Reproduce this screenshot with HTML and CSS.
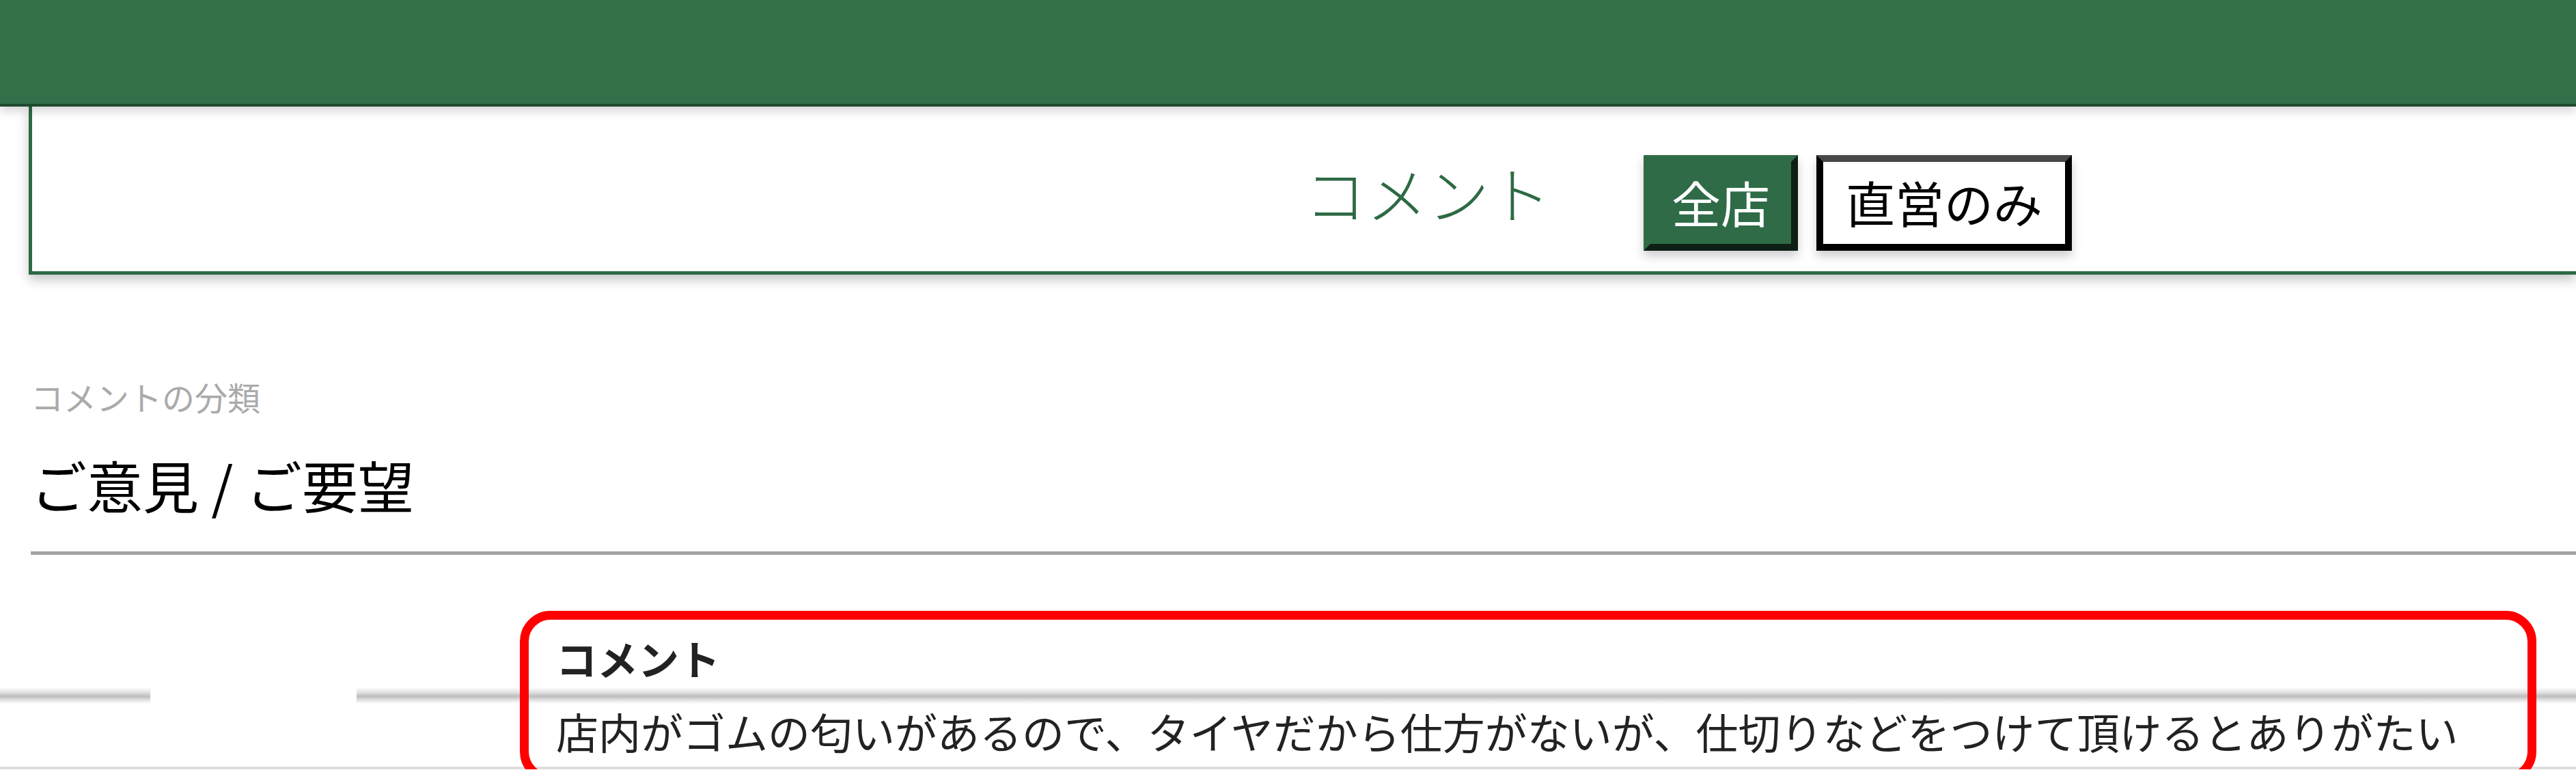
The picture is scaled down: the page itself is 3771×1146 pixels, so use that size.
FILE: index.html
```html
<!DOCTYPE html>
<html lang="ja">
<head>
    <meta charset="UTF-8">
    <meta name="viewport" content="width=device-width, initial-scale=1.0">
    <title>コメント</title>
    <link rel="stylesheet" href="styles.css">
</head>
<body>
    <div class="topbar"></div>

    <div class="headbox">
        <div class="page-title">コメント</div>
        <div class="toggle">
            <button class="toggle-btn active">全店</button>
            <button class="toggle-btn">直営のみ</button>
        </div>
    </div>

    <div class="field">
        <div class="field-label">コメントの分類</div>
        <div class="field-value">ご意見 / ご要望</div>
    </div>

    <div class="comments">
        <div class="comments-head">コメント</div>
        <div class="comments-rule"><span class="rule-gap"></span></div>
        <div class="comments-row">店内がゴムの匂いがあるので、タイヤだから仕方がないが、仕切りなどをつけて頂けるとありがたい</div>
        <!-- annotation frame over the comment cell -->
        <div class="highlight"></div>
    </div>
</body>
</html>
```

FILE: styles.css
```css
body {
    margin: 0;
    padding: 0;
    background: #fff;
    font-family: "Noto Sans CJK JP", "Noto Sans", sans-serif;
    color: #000;
    overflow-x: hidden;
}

.topbar {
    position: relative;
    z-index: 2;
    height: 152px;
    background-color: #33704a;
    border-bottom: 4px solid #1f4a2f;
    box-shadow: 0 6px 14px rgba(0, 0, 0, 0.18);
}

.headbox {
    display: flex;
    align-items: center;
    margin-left: 42px;
    padding: 71px 0 30px 1863px;
    border: 5px solid #2e6a44;
    border-top: none;
    border-right: none;
    background: #fff;
    box-shadow: 0 8px 16px rgba(0, 0, 0, 0.22);
}

.page-title {
    font-size: 90px;
    font-weight: 300;
    line-height: 98px;
    color: #2e6a44;
    margin-bottom: 32px;
}

.toggle {
    display: flex;
    gap: 27px;
    margin-left: 136px;
}

.toggle-btn {
    font-family: inherit;
    font-size: 72px;
    line-height: 104px;
    padding: 6px 33px 10px;
    border: 10px solid #000;
    border-top-color: #484848;
    background: #fff;
    color: #000;
    box-shadow: 0 8px 14px rgba(0, 0, 0, 0.2);
    cursor: pointer;
}

.toggle-btn.active {
    background: #2f6b47;
    color: #fff;
    border-top-color: #2f6b47;
    border-left-color: #2f6b47;
    border-right-color: #0e1f15;
    border-bottom-color: #0e1f15;
    padding-left: 31px;
    padding-right: 31px;
}

.field {
    margin: 143px 0 0 45px;
    padding-bottom: 39px;
    border-bottom: 5px solid #a3a3a3;
}

.field-label {
    font-size: 48px;
    line-height: 70px;
    color: #aaa;
}

.field-value {
    margin-top: 34px;
    font-size: 82px;
    line-height: 119px;
    color: #000;
}

.comments {
    position: relative;
    margin-top: 107px;
}

.comments-head {
    padding-left: 814px;
    font-size: 60px;
    font-weight: 700;
    line-height: 87px;
    color: #222;
}

.comments-rule {
    display: flex;
    height: 24px;
    background: linear-gradient(to bottom, #fff 0%, #e2e2e2 30%, #bdbdbd 55%, #e6e6e6 80%, #fff 100%);
}

.rule-gap {
    margin-left: 220px;
    width: 302px;
    background: #fff;
}

.comments-row {
    padding: 0 0 12px 814px;
    font-size: 62px;
    line-height: 80px;
    color: #222;
    border-bottom: 4px solid #dedede;
}

.highlight {
    position: absolute;
    left: 761px;
    top: -25px;
    width: 2952px;
    height: 251px;
    box-sizing: border-box;
    border: 13px solid #ff0000;
    border-radius: 45px;
}
```
